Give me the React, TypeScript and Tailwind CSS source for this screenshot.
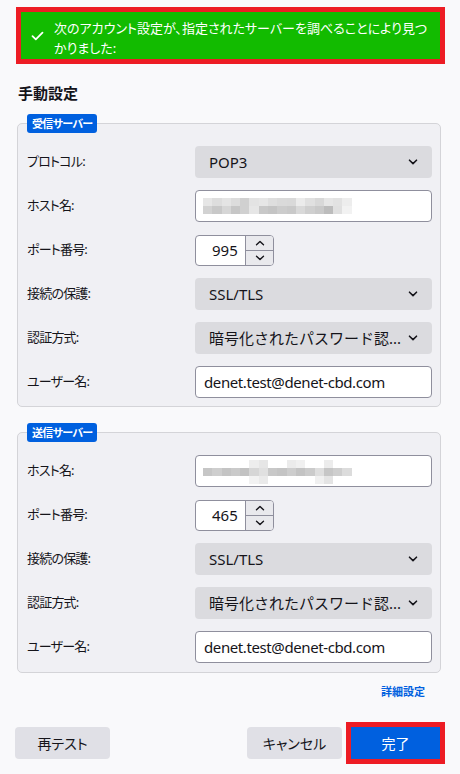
import React from 'react';

const FONT = { fontFamily: '"Noto Sans", "Noto Sans CJK JP", sans-serif' };

const host1 = [
  ['#e6e6e6', '#dddddd', '#e4e4e4', '#dcdcdc', '#d0d0d0', '#e3e3e3', '#e6e6e6', '#dedede', '#dadada', '#d9d9d9', '#ebebeb', '#e0e0e0', '#d8d8d8', '#e6e6e6', '#e2e2e2', '#ededed'],
  ['#d2d2d2', '#c8c8c8', '#d6d6d6', '#c6c6c6', '#d0d0d0', '#e6e6e6', '#c8c8c8', '#c4c4c4', '#cccccc', '#c9c9c9', '#d9d9d9', '#cfcfcf', '#c9c9c9', '#bcbcbc', '#e0e0e0', '#f2f2f2'],
];

const host2 = [
  ['#ffffff', '#ffffff', '#ffffff', '#ffffff', '#ffffff', '#ededed', '#e6e6e6', '#ffffff', '#ffffff', '#ebebeb', '#f0f0f0', '#ffffff', '#ffffff', '#ececec', '#ffffff', '#ffffff'],
  ['#c6c6c6', '#cecece', '#c4c4c4', '#cacaca', '#c2c2c2', '#d6d6d6', '#e0e0e0', '#c8c8c8', '#c4c4c4', '#cdcdcd', '#c3c3c3', '#cbcbcb', '#dedede', '#c6c6c6', '#cecece', '#dcdcdc'],
  ['#ffffff', '#ffffff', '#ffffff', '#ffffff', '#ffffff', '#f2f2f2', '#eaeaea', '#ffffff', '#ffffff', '#ffffff', '#ffffff', '#ffffff', '#f0f0f0', '#e4e4e4', '#ffffff', '#ffffff'],
];

function Mosaic({ rows }: { rows: string[][] }) {
  return (
    <div className="flex flex-col">
      {rows.map((r, i) => (
        <div key={i} className="flex">
          {r.map((c, j) => (
            <div key={j} className="w-[9.3px] h-[8px]" style={{ backgroundColor: c }} />
          ))}
        </div>
      ))}
    </div>
  );
}

function Chevron() {
  return (
    <svg width="10" height="6" viewBox="0 0 10 6" className="shrink-0">
      <path d="M1.5 1.2 L5 4.6 L8.5 1.2" fill="none" stroke="#15141a" strokeWidth="1.6" strokeLinecap="round" strokeLinejoin="round" />
    </svg>
  );
}

function Select({ value }: { value: string }) {
  return (
    <div className="h-[32px] w-[237px] rounded-[4px] bg-[#dbdbdf] flex items-center justify-between pl-[14px] pr-[14px] text-[15px] text-[#15141a]">
      <span>{value}</span>
      <Chevron />
    </div>
  );
}

function TextInput({ children }: { children: React.ReactNode }) {
  return (
    <div className="h-[32px] w-[237px] rounded-[4px] bg-white border border-[#8f8f9d] flex items-center pl-[8px] text-[15px] tracking-[-0.4px] text-[#15141a]">
      {children}
    </div>
  );
}

function PortInput({ value }: { value: string }) {
  return (
    <div className="h-[31px] w-[79px] rounded-[4px] bg-white border border-[#8f8f9d] flex overflow-hidden">
      <div className="flex-1 flex items-center pl-[16px] text-[15px] text-[#15141a]">{value}</div>
      <div className="w-[28px] flex flex-col border-l border-[#8f8f9d] bg-[#e9e9ed]">
        <div className="flex-1 flex items-center justify-center border-b border-[#8f8f9d]">
          <svg width="10" height="6" viewBox="0 0 10 6">
            <path d="M1.5 4.8 L5 1.4 L8.5 4.8" fill="none" stroke="#15141a" strokeWidth="1.4" strokeLinecap="round" strokeLinejoin="round" />
          </svg>
        </div>
        <div className="flex-1 flex items-center justify-center">
          <svg width="10" height="6" viewBox="0 0 10 6">
            <path d="M1.5 1.2 L5 4.6 L8.5 1.2" fill="none" stroke="#15141a" strokeWidth="1.4" strokeLinecap="round" strokeLinejoin="round" />
          </svg>
        </div>
      </div>
    </div>
  );
}

function Row({ label, children }: { label: string; children: React.ReactNode }) {
  return (
    <div className="flex items-center h-[32px]">
      <div className="w-[168px] text-[13px] tracking-[-0.8px] text-[#15141a] [font-feature-settings:'palt']">{label}</div>
      {children}
    </div>
  );
}

function Group({ title, children, pb }: { title: string; children: React.ReactNode; pb: string }) {
  return (
    <div className={`relative ml-[17px] w-[424px] rounded-[5px] border border-[#d4d4d8] bg-[#f0f0f4] pl-[9px] pt-[22px] ${pb}`}>
      <div className="absolute left-[9px] top-[-10px] h-[19px] px-[5px] rounded-[3px] bg-[#0060df] text-white text-[11px] tracking-[-0.7px] font-bold leading-[19px] [font-feature-settings:'palt']">
        {title}
      </div>
      <div className="flex flex-col gap-[12px]">{children}</div>
    </div>
  );
}

export default function App() {
  return (
    <div className="w-[460px] h-[774px] bg-[#f9f9fb] overflow-hidden" style={FONT}>
      {/* Success banner */}
      <div className="ml-[16px] mt-[7px] w-[429px] border-[5px] border-[#ed1c24]">
        <div className="bg-[#12bb00] flex items-center pl-[10px] pt-[6px] pb-[1px] h-[47px]">
          <svg width="13" height="10" viewBox="0 0 13 10" className="shrink-0 mt-[-4px]">
            <path d="M1.5 5.2 L4.8 8.4 L11.5 1.6" fill="none" stroke="#ffffff" strokeWidth="1.8" strokeLinecap="round" strokeLinejoin="round" />
          </svg>
          <div className="ml-[10px] text-[13px] leading-[20px] text-white whitespace-nowrap [font-feature-settings:'palt'] self-start">
            次のアカウント設定が、指定されたサーバーを調べることにより見つ
            <br />
            かりました:
          </div>
        </div>
      </div>

      <div className="ml-[18px] mt-[19px] text-[15px] leading-[20px] font-bold text-[#15141a]">手動設定</div>

      <div className="mt-[20px]">
        <Group title="受信サーバー" pb="pb-[8px]">
          <Row label="プロトコル:"><Select value="POP3" /></Row>
          <Row label="ホスト名:">
            <TextInput><div className="ml-[-1px]"><Mosaic rows={host1} /></div></TextInput>
          </Row>
          <Row label="ポート番号:"><PortInput value="995" /></Row>
          <Row label="接続の保護:"><Select value="SSL/TLS" /></Row>
          <Row label="認証方式:"><Select value="暗号化されたパスワード認..." /></Row>
          <Row label="ユーザー名:"><TextInput>denet.test@denet-cbd.com</TextInput></Row>
        </Group>
      </div>

      <div className="mt-[25px]">
        <Group title="送信サーバー" pb="pb-[9px]">
          <Row label="ホスト名:">
            <TextInput><div className="ml-[-1px] mt-[2px]"><Mosaic rows={host2} /></div></TextInput>
          </Row>
          <Row label="ポート番号:"><PortInput value="465" /></Row>
          <Row label="接続の保護:"><Select value="SSL/TLS" /></Row>
          <Row label="認証方式:"><Select value="暗号化されたパスワード認..." /></Row>
          <Row label="ユーザー名:"><TextInput>denet.test@denet-cbd.com</TextInput></Row>
        </Group>
      </div>

      <div className="flex justify-end mr-[35px] mt-[11px]">
        <span className="text-[11px] leading-[16px] font-bold text-[#0060df]">詳細設定</span>
      </div>

      <div className="flex items-center mt-[22px] ml-[15px] w-[430px] h-[42px]">
        <div className="w-[95px] h-[32px] rounded-[4px] bg-[#e0e0e6] flex items-center justify-center text-[14px] text-[#15141a] [font-feature-settings:'palt']">
          再テスト
        </div>
        <div className="flex-1" />
        <div className="w-[95px] h-[32px] rounded-[4px] bg-[#e0e0e6] flex items-center justify-center text-[14px] text-[#15141a] [font-feature-settings:'palt']">
          キャンセル
        </div>
        <div className="ml-[4px] w-[99px] h-[42px] border-[5px] border-[#ed1c24]">
          <div className="w-full h-full bg-[#0060df] flex items-center justify-center text-[14px] text-white">完了</div>
        </div>
      </div>
    </div>
  );
}
